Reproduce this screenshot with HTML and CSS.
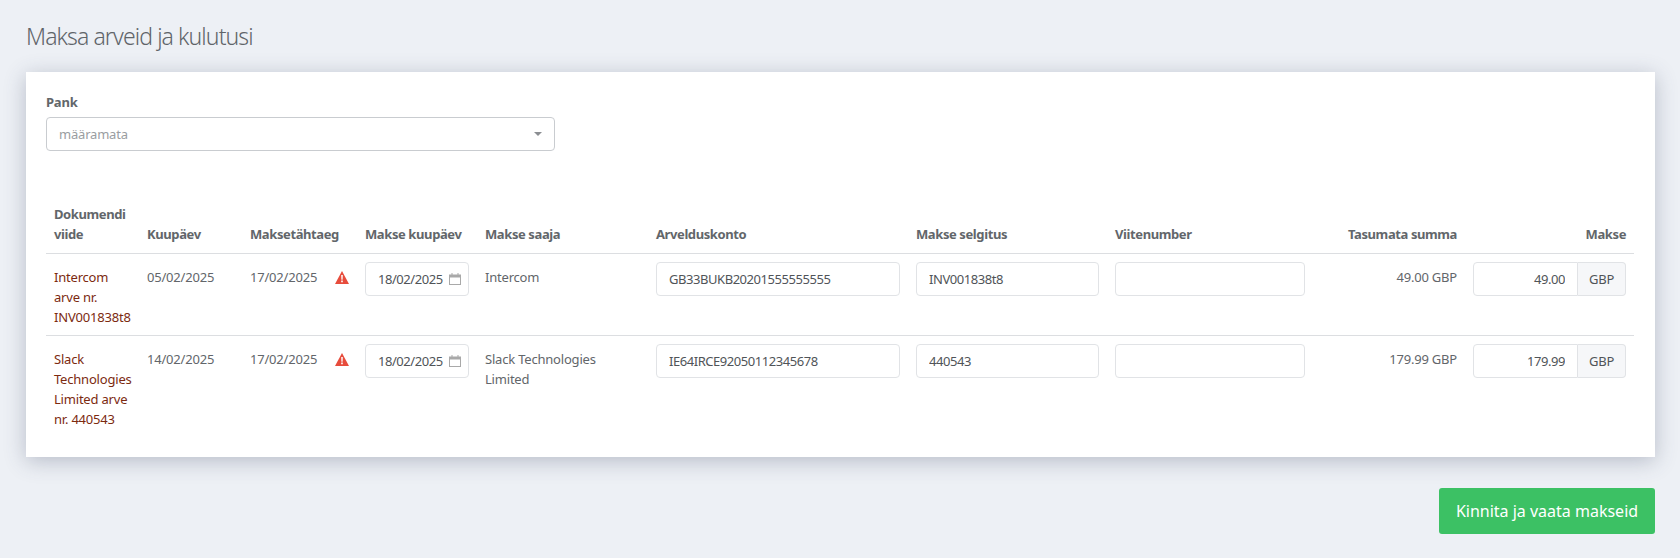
FILE: index.html
```html
<!DOCTYPE html>
<html lang="et">

<head>
    <meta charset="UTF-8">
    <meta name="viewport" content="width=device-width, initial-scale=1.0">
    <title>Maksa arveid ja kulutusi</title>
    <link rel="stylesheet" href="styles.css">
</head>

<body>
    <h1 class="page-title">Maksa arveid ja kulutusi</h1>

    <div class="card">
        <div class="bank-field">
            <label class="bank-label">Pank</label>
            <div class="select">
                <span>määramata</span>
                <span class="caret"></span>
            </div>
        </div>

        <table class="pay-table">
            <colgroup>
                <col class="c-doc">
                <col class="c-date">
                <col class="c-due">
                <col class="c-paydate">
                <col class="c-payee">
                <col class="c-account">
                <col class="c-desc">
                <col class="c-ref">
                <col class="c-open">
                <col class="c-pay">
            </colgroup>
            <thead>
                <tr>
                    <th>Dokumendi viide</th>
                    <th>Kuupäev</th>
                    <th>Maksetähtaeg</th>
                    <th>Makse kuupäev</th>
                    <th>Makse saaja</th>
                    <th>Arvelduskonto</th>
                    <th>Makse selgitus</th>
                    <th>Viitenumber</th>
                    <th class="right">Tasumata summa</th>
                    <th class="right">Makse</th>
                </tr>
            </thead>
            <tbody>
                <tr>
                    <td><a class="doc-link" href="#">Intercom arve nr. INV001838t8</a></td>
                    <td>05/02/2025</td>
                    <td>
                        <div class="due">
                            <span>17/02/2025</span>
                            <svg class="warn" viewBox="0 0 14 13"><path d="M7 0 14 13H0Z" fill="#e74c3c"/><path d="M6.2 4h1.6l-.2 4.8H6.4ZM6.2 9.6h1.6v1.6H6.2Z" fill="#fff"/></svg>
                        </div>
                    </td>
                    <td>
                        <div class="input date-input">
                            <span>18/02/2025</span>
                            <svg class="cal" viewBox="0 0 12 12"><path d="M2.5 0h1v1.5h5V0h1v1.5H12V12H0V1.5h2.5ZM1 4.5V11h10V4.5Z" fill="#a9a9a9"/></svg>
                        </div>
                    </td>
                    <td>Intercom</td>
                    <td><input class="input" type="text" value="GB33BUKB20201555555555"></td>
                    <td><input class="input" type="text" value="INV001838t8"></td>
                    <td><input class="input" type="text"></td>
                    <td class="right">49.00 GBP</td>
                    <td>
                        <div class="amount">
                            <input class="input" type="text" value="49.00">
                            <span class="currency">GBP</span>
                        </div>
                    </td>
                </tr>
                <tr>
                    <td><a class="doc-link" href="#">Slack Technologies Limited arve nr. 440543</a></td>
                    <td>14/02/2025</td>
                    <td>
                        <div class="due">
                            <span>17/02/2025</span>
                            <svg class="warn" viewBox="0 0 14 13"><path d="M7 0 14 13H0Z" fill="#e74c3c"/><path d="M6.2 4h1.6l-.2 4.8H6.4ZM6.2 9.6h1.6v1.6H6.2Z" fill="#fff"/></svg>
                        </div>
                    </td>
                    <td>
                        <div class="input date-input">
                            <span>18/02/2025</span>
                            <svg class="cal" viewBox="0 0 12 12"><path d="M2.5 0h1v1.5h5V0h1v1.5H12V12H0V1.5h2.5ZM1 4.5V11h10V4.5Z" fill="#a9a9a9"/></svg>
                        </div>
                    </td>
                    <td>Slack Technologies Limited</td>
                    <td><input class="input" type="text" value="IE64IRCE92050112345678"></td>
                    <td><input class="input" type="text" value="440543"></td>
                    <td><input class="input" type="text"></td>
                    <td class="right">179.99 GBP</td>
                    <td>
                        <div class="amount">
                            <input class="input" type="text" value="179.99">
                            <span class="currency">GBP</span>
                        </div>
                    </td>
                </tr>
            </tbody>
        </table>
    </div>

    <div class="actions">
        <button class="confirm" type="button">Kinnita ja vaata makseid</button>
    </div>
</body>

</html>
```

FILE: styles.css
```css
* {
    box-sizing: border-box;
    padding: 0;
    margin: 0;
}

body {
    font-family: "Noto Sans", sans-serif;
    font-size: 13px;
    line-height: 20px;
    letter-spacing: -0.2px;
    color: #62666a;
    background-color: #edf0f5;
    padding: 21px 25px 0 26px;
}

.page-title {
    font-size: 23px;
    font-weight: 300;
    line-height: 30px;
    letter-spacing: -0.9px;
    color: #5f6469;
    margin-bottom: 21px;
}

.card {
    background: #fff;
    box-shadow: 0 4px 20px rgba(60, 70, 100, 0.3);
    padding: 20px 21px 20px 20px;
}

.bank-label {
    display: block;
    font-weight: 700;
    margin-bottom: 5px;
}

.select {
    display: flex;
    justify-content: space-between;
    align-items: center;
    width: 509px;
    height: 34px;
    padding: 0 12px;
    border: 1px solid #c9ccd0;
    border-radius: 4px;
    color: #9a9da1;
}

.caret {
    width: 0;
    height: 0;
    border-left: 4px solid transparent;
    border-right: 4px solid transparent;
    border-top: 4px solid #8b8e92;
}

.pay-table {
    width: 1588px;
    margin-top: 45px;
    border-collapse: collapse;
    table-layout: fixed;
}

.c-doc { width: 93px; }
.c-date { width: 103px; }
.c-due { width: 115px; }
.c-paydate { width: 120px; }
.c-payee { width: 171px; }
.c-account { width: 260px; }
.c-desc { width: 199px; }
.c-ref { width: 206px; }
.c-open { width: 152px; }
.c-pay { width: 169px; }

th {
    text-align: left;
    vertical-align: bottom;
    font-weight: 700;
    letter-spacing: -0.4px;
    padding: 8px 8px 9px;
    border-bottom: 1px solid #dcdee1;
}

td {
    vertical-align: top;
    padding: 13px 8px 8px;
    border-bottom: 1px solid #dcdee1;
}

tbody tr:last-child td {
    border-bottom: 0;
}

th.right,
td.right {
    text-align: right;
}

td:has(.input) {
    padding-top: 8px;
}

.doc-link {
    color: #7c2a10;
    text-decoration: none;
}

.due {
    display: flex;
    justify-content: space-between;
    align-items: center;
}

.warn {
    width: 14px;
    height: 13px;
}

.input {
    display: block;
    width: 100%;
    height: 34px;
    padding: 0 12px;
    border: 1px solid #e1e3e6;
    border-radius: 4px;
    font: inherit;
    letter-spacing: -0.45px;
    color: #505458;
    background: #fff;
    outline: none;
}

.date-input {
    display: flex;
    justify-content: space-between;
    align-items: center;
    padding-right: 7px;
    white-space: nowrap;
}

.cal {
    width: 12px;
    height: 12px;
    flex: none;
}

.amount {
    display: flex;
}

.amount .input {
    width: 105px;
    text-align: right;
    border-radius: 4px 0 0 4px;
}

.currency {
    flex: 1;
    height: 34px;
    line-height: 32px;
    text-align: center;
    color: #505458;
    background: #f6f7f9;
    border: 1px solid #e1e3e6;
    border-left: 0;
    border-radius: 0 4px 4px 0;
}

.actions {
    display: flex;
    justify-content: flex-end;
    margin-top: 31px;
}

.confirm {
    width: 216px;
    height: 46px;
    font-family: inherit;
    font-size: 16px;
    color: #fff;
    background: #3cc164;
    border: 0;
    border-radius: 3px;
}
```
